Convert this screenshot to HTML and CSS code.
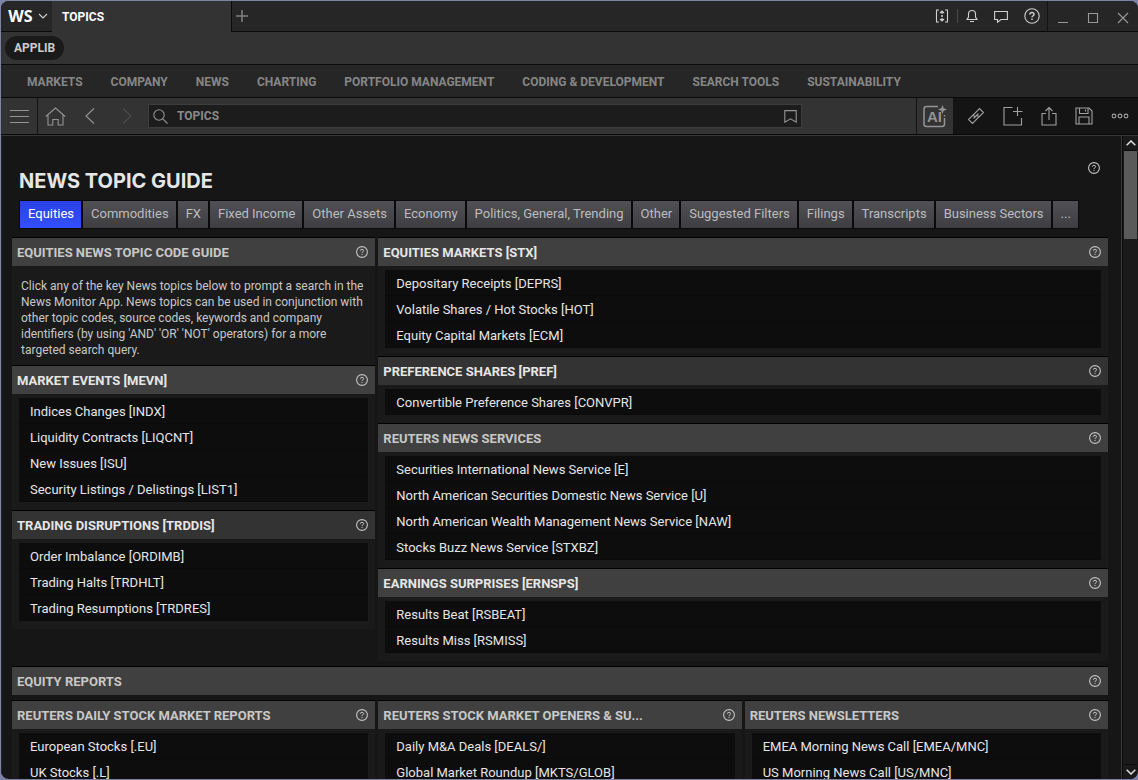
FILE: index.html
```html
<!DOCTYPE html>
<html lang="en">
<head>
<meta charset="utf-8">
<title>News Topic Guide</title>
<link rel="stylesheet" href="styles.css">
</head>
<body>
<svg class="defs" aria-hidden="true">
  <symbol id="help" viewBox="0 0 12 12">
    <circle cx="6" cy="6" r="5.4" fill="none" stroke="currentColor" stroke-width="1.1"/>
    <path d="M4.400 4.900V4.600Q4.400 3.300 6 3.300T7.600 4.700Q7.600 5.500 6.600 5.900Q6 6.200 6 7M6 7.900V9" fill="none" stroke="currentColor" stroke-width="1"/>
  </symbol>
</svg>
<div class="window">
  <header class="titlebar">
    <button class="brand"><span class="logo">WS</span>
      <svg width="10" height="6" viewBox="0 0 10 6"><path d="M1 1l4 4 4-4" class="line"/></svg>
    </button>
    <button class="window-tab">TOPICS</button>
    <div class="title-rest">
      <button class="plus" aria-label="New tab"><svg width="12" height="12" viewBox="0 0 12 12"><path d="M6 0v12M0 6h12" class="line thick"/></svg></button>
      <div class="status">
        <button aria-label="Layout"><svg width="14" height="14" viewBox="0 0 14 14"><path d="M4 1H1.500v12H4M10 1h2.500v12H10M5 4l2-2 2 2M5 10l2 2 2-2M7 2v3M7 9v3" class="line"/><circle cx="7" cy="7" r="1" fill="currentColor"/></svg></button>
        <span class="split"></span>
        <button aria-label="Alerts"><svg width="12" height="14" viewBox="0 0 12 14"><path d="M1 10.500h10L9.500 8V5Q9.500 1.500 6 1.500T2.500 5v3zM4 12.500h4" class="line"/></svg></button>
        <button aria-label="Messages"><svg width="14" height="13" viewBox="0 0 14 13"><path d="M.6 1.500h12.800v8H7l-3.500 2.700V9.500H.6z" class="line"/></svg></button>
        <button aria-label="Help"><svg width="16" height="16" viewBox="0 0 16 16"><circle cx="8" cy="8" r="7.200" class="line"/><path d="M5.900 6.500Q5.900 4.600 8 4.600T10 6.300Q10 7.200 9 7.800Q8 8.300 8 9.300M8 10.500v1.500" class="line thick"/></svg></button>
      </div>
      <div class="controls">
        <button aria-label="Minimize"><svg width="12" height="12" viewBox="0 0 12 12"><path d="M1 10.500h10" class="line"/></svg></button>
        <button aria-label="Maximize"><svg width="12" height="12" viewBox="0 0 12 12"><path d="M1.500 1.500h9v9h-9z" class="line"/></svg></button>
        <button aria-label="Close"><svg width="12" height="12" viewBox="0 0 12 12"><path d="M1 1l10 10M11 1L1 11" class="line"/></svg></button>
      </div>
    </div>
  </header>
  <div class="applib-row"><button class="applib">APPLIB</button></div>
  <nav class="menu">
    <a href="#">MARKETS</a><a href="#">COMPANY</a><a href="#">NEWS</a><a href="#">CHARTING</a><a href="#">PORTFOLIO MANAGEMENT</a><a href="#">CODING &amp; DEVELOPMENT</a><a href="#">SEARCH TOOLS</a><a href="#">SUSTAINABILITY</a>
  </nav>
  <div class="toolbar">
    <button class="burger" aria-label="Menu"><svg width="19" height="15" viewBox="0 0 19 15"><path d="M0 1.500h19M0 7.500h19M0 13.500h19" class="line"/></svg></button>
    <button class="home" aria-label="Home"><svg width="21" height="19" viewBox="0 0 21 19"><path d="M.8 9.500L10.500 1l9.700 8.500M3 7.800V18h4.800v-5.500h5.400V18H18V7.800" class="line"/></svg></button>
    <button class="back" aria-label="Back"><svg width="10" height="16" viewBox="0 0 10 16"><path d="M9 .5L1 8l8 7.500" class="line"/></svg></button>
    <button class="forward" aria-label="Forward"><svg width="10" height="16" viewBox="0 0 10 16"><path d="M1 .5L9 8l-8 7.500" class="line"/></svg></button>
    <div class="search">
      <svg width="15" height="15" viewBox="0 0 15 15"><circle cx="6" cy="6" r="5.200" class="line"/><path d="M9.800 9.800l4.700 4.700" class="line"/></svg>
      <input type="text" value="TOPICS" aria-label="Search">
      <button aria-label="Bookmark"><svg width="13" height="13" viewBox="0 0 13 13"><path d="M.8 .6h11.400v11.600L6.500 8.800 .8 12.200z" class="line"/></svg></button>
    </div>
    <button class="ai" aria-label="AI"><svg width="24" height="23" viewBox="0 0 24 23"><path d="M15 1.500H3.500Q1 1.500 1 4v15q0 2.500 2.500 2.500h15.500q2.500 0 2.500-2.500v-6M21.500 11.500V10" class="line thick"/><path d="M19.500 0l1.200 3.300L24 4.500l-3.300 1.200L19.500 9l-1.200-3.300L15 4.500l3.300-1.200z" fill="currentColor"/><text x="4" y="17" class="ai-text">AI</text></svg></button>
    <div class="tools">
      <button aria-label="Link"><svg width="18" height="18" viewBox="0 0 18 18"><path d="M8 9.800L6.200 8 12.500 1.500 16.500 5.500 12 10 10.800 8.800M10 8.200L11.800 10 5.500 16.500 1.500 12.500 6 8 7.200 9.200M6.500 11.500l5-5" class="line"/></svg></button>
      <button aria-label="Add window"><svg width="20" height="20" viewBox="0 0 20 20"><path d="M9.500 1.500H1v17.500h17.500V12M14.500 1v9M10 5.500h9.500" class="line"/></svg></button>
      <button aria-label="Share"><svg width="16" height="20" viewBox="0 0 16 20"><path d="M5 7.500H1V19h14V7.500h-4M8 14V1.500M4.500 5L8 1.500 11.500 5" class="line"/></svg></button>
      <button aria-label="Save"><svg width="18" height="18" viewBox="0 0 18 18"><path d="M1 1h13l3 3v13H1zM4.500 1v5.500h8.500V1M10.500 2.500v2M4 17v-7h10v7" class="line"/></svg></button>
      <button aria-label="More"><svg width="18" height="6" viewBox="0 0 18 6"><circle cx="3" cy="3" r="1.900" class="line"/><circle cx="9" cy="3" r="1.900" class="line"/><circle cx="15" cy="3" r="1.900" class="line"/></svg></button>
    </div>
  </div>
  <div class="viewport">
    <main class="page">
      <div class="page-head">
        <h1>NEWS TOPIC GUIDE</h1>
        <button class="help" aria-label="Help"><svg><use href="#help"/></svg></button>
      </div>
      <div class="tabs">
        <button class="active">Equities</button><button>Commodities</button><button>FX</button><button>Fixed Income</button><button>Other Assets</button><button>Economy</button><button>Politics, General, Trending</button><button>Other</button><button>Suggested Filters</button><button>Filings</button><button>Transcripts</button><button>Business Sectors</button><button>...</button>
      </div>
      <div class="grid">
        <div class="column">
          <section class="panel">
            <div class="head"><h2>EQUITIES NEWS TOPIC CODE GUIDE</h2><button class="help" aria-label="Help"><svg><use href="#help"/></svg></button></div>
            <p>Click any of the key News topics below to prompt a search in the News Monitor App. News topics can be used in conjunction with other topic codes, source codes, keywords and company identifiers (by using 'AND' 'OR' 'NOT' operators) for a more targeted search query.</p>
          </section>
          <section class="panel">
            <div class="head code"><h2>MARKET EVENTS [MEVN]</h2><button class="help" aria-label="Help"><svg><use href="#help"/></svg></button></div>
            <ul><li><a href="#">Indices Changes [INDX]</a></li><li><a href="#">Liquidity Contracts [LIQCNT]</a></li><li><a href="#">New Issues [ISU]</a></li><li><a href="#">Security Listings / Delistings [LIST1]</a></li></ul>
          </section>
          <section class="panel">
            <div class="head code dark"><h2>TRADING DISRUPTIONS [TRDDIS]</h2><button class="help" aria-label="Help"><svg><use href="#help"/></svg></button></div>
            <ul><li><a href="#">Order Imbalance [ORDIMB]</a></li><li><a href="#">Trading Halts [TRDHLT]</a></li><li><a href="#">Trading Resumptions [TRDRES]</a></li></ul>
          </section>
        </div>
        <div class="column wide">
          <section class="panel">
            <div class="head code"><h2>EQUITIES MARKETS [STX]</h2><button class="help" aria-label="Help"><svg><use href="#help"/></svg></button></div>
            <ul><li><a href="#">Depositary Receipts [DEPRS]</a></li><li><a href="#">Volatile Shares / Hot Stocks [HOT]</a></li><li><a href="#">Equity Capital Markets [ECM]</a></li></ul>
          </section>
          <section class="panel">
            <div class="head code dark"><h2>PREFERENCE SHARES [PREF]</h2><button class="help" aria-label="Help"><svg><use href="#help"/></svg></button></div>
            <ul><li><a href="#">Convertible Preference Shares [CONVPR]</a></li></ul>
          </section>
          <section class="panel">
            <div class="head"><h2>REUTERS NEWS SERVICES</h2><button class="help" aria-label="Help"><svg><use href="#help"/></svg></button></div>
            <ul><li><a href="#">Securities International News Service [E]</a></li><li><a href="#">North American Securities Domestic News Service [U]</a></li><li><a href="#">North American Wealth Management News Service [NAW]</a></li><li><a href="#">Stocks Buzz News Service [STXBZ]</a></li></ul>
          </section>
          <section class="panel">
            <div class="head code"><h2>EARNINGS SURPRISES [ERNSPS]</h2><button class="help" aria-label="Help"><svg><use href="#help"/></svg></button></div>
            <ul><li><a href="#">Results Beat [RSBEAT]</a></li><li><a href="#">Results Miss [RSMISS]</a></li></ul>
          </section>
        </div>
        <section class="panel full">
          <div class="head"><h2>EQUITY REPORTS</h2><button class="help" aria-label="Help"><svg><use href="#help"/></svg></button></div>
        </section>
        <section class="panel">
          <div class="head"><h2>REUTERS DAILY STOCK MARKET REPORTS</h2><button class="help" aria-label="Help"><svg><use href="#help"/></svg></button></div>
          <ul><li><a href="#">European Stocks [.EU]</a></li><li><a href="#">UK Stocks [.L]</a></li></ul>
        </section>
        <section class="panel">
          <div class="head"><h2>REUTERS STOCK MARKET OPENERS &amp; SU...</h2><button class="help" aria-label="Help"><svg><use href="#help"/></svg></button></div>
          <ul><li><a href="#">Daily M&amp;A Deals [DEALS/]</a></li><li><a href="#">Global Market Roundup [MKTS/GLOB]</a></li></ul>
        </section>
        <section class="panel">
          <div class="head"><h2>REUTERS NEWSLETTERS</h2><button class="help" aria-label="Help"><svg><use href="#help"/></svg></button></div>
          <ul><li><a href="#">EMEA Morning News Call [EMEA/MNC]</a></li><li><a href="#">US Morning News Call [US/MNC]</a></li></ul>
        </section>
      </div>
    </main>
    <div class="scrollbar">
      <button aria-label="Scroll up"><svg width="10" height="6" viewBox="0 0 10 6"><path d="M.7 5.300L5 1l4.300 4.300" class="line thick"/></svg></button>
      <div class="track"><div class="thumb"></div></div>
      <button aria-label="Scroll down"><svg width="10" height="6" viewBox="0 0 10 6"><path d="M.7 .7L5 5 9.300 .7" class="line thick"/></svg></button>
    </div>
  </div>
</div>
</body>
</html>
```
FILE: styles.css
```css
* { box-sizing: border-box; }
body {
  margin: 0;
  padding: 1px 0 1px 1px;
  height: 100vh;
  background: #7c82a8;
  font-family: Roboto, "Liberation Sans", sans-serif;
  font-size: 13px;
  color: #e6e6e6;
  overflow: hidden;
}
.defs { display: none; }
button {
  display: flex;
  align-items: center;
  justify-content: center;
  margin: 0;
  padding: 0;
  border: 0;
  background: none;
  color: inherit;
  font: inherit;
}
a { color: inherit; text-decoration: none; }
h1, h2, p, ul { margin: 0; padding: 0; }
svg { display: block; flex: none; }
.line { fill: none; stroke: currentColor; stroke-width: 1.1; }
.thick { stroke-width: 1.5; }

.window {
  display: flex;
  flex-direction: column;
  height: 100%;
  border-radius: 8px;
  background: #161616;
  overflow: hidden;
}

.titlebar { display: flex; flex: none; height: 31px; background: #333; }
.brand { width: 51px; gap: 5px; padding-left: 3px; background: #262626; border-bottom: 1px solid #0a0a0a; color: #d0d0d0; }
.logo { font: bold 16px "Noto Sans", sans-serif; color: #fff; }
.window-tab { width: 179px; padding-left: 10px; justify-content: flex-start; font-size: 12px; font-weight: 700; color: #fff; }
.title-rest {
  display: flex;
  flex: 1;
  background: #262626;
  border-left: 1px solid #0a0a0a;
  border-bottom: 1px solid #0a0a0a;
}
.plus { width: 20px; color: #808080; }
.status { display: flex; align-items: center; gap: 16px; margin-left: auto; padding-right: 7px; color: #d0d0d0; }
.status .split { width: 1px; height: 14px; margin: 0 -8px; background: #4a4a4a; }
.controls { display: flex; align-items: center; gap: 18px; padding: 3px 9px 0; border-left: 1px solid #141414; color: #999; }

.applib-row { display: flex; flex: none; align-items: center; height: 33px; padding-left: 4px; background: #333; border-bottom: 1px solid #0a0a0a; }
.applib { height: 24px; padding: 0 9px; border-radius: 12px; background: #1a1a1a; font-size: 12px; font-weight: 700; color: #ccc; }

.menu { display: flex; flex: none; align-items: center; gap: 28px; height: 33px; padding: 2px 0 0 26px; background: #262626; border-bottom: 1px solid #0a0a0a; font-size: 12px; font-weight: 700; color: #868686; white-space: nowrap; }

.toolbar { display: flex; flex: none; align-items: stretch; height: 37px; background: #333; border-bottom: 1px solid #0a0a0a; color: #949494; }
.burger { width: 37px; border-right: 1px solid #141414; }
.home { width: 35px; }
.back { width: 34px; }
.forward { width: 40px; color: #4c4c4c; }
.search { display: flex; flex: 1; align-items: center; gap: 9px; height: 24px; margin: 6px 114px 0 1px; padding: 0 4px; background: #1c1c1c; border: 1px solid #3d3d3d; }
.search input { flex: 1; min-width: 0; padding: 0; border: 0; outline: 0; background: none; font: 700 12px Roboto, sans-serif; color: #8a8a8a; }
.ai { width: 37px; border-left: 1px solid #141414; }
.ai-text { font: 700 15px "Liberation Sans", sans-serif; fill: currentColor; }
.tools { display: flex; align-items: center; width: 185px; padding: 0 9px 0 14px; justify-content: space-between; background: #141414; color: #a0a0a0; }

.viewport { display: flex; flex: 1; min-height: 0; border-top: 1px solid #363636; border-left: 1px solid #262626; }
.page { flex: 1; min-width: 0; padding: 26px 13px 0 10px; border-right: 1px solid #3a3a3a; overflow: hidden; }
.page-head { display: flex; justify-content: space-between; align-items: flex-start; height: 38px; padding: 0 8px 0 7px; }
h1 { font: 700 20px/26px Inter, sans-serif; }
.page-head h1 { align-self: center; }
.help { width: 12px; height: 12px; color: #c4c4c4; }
.help svg { width: 12px; height: 12px; }

.tabs { display: flex; width: max-content; margin: 0 0 8px 7px; border: 1px solid #0a0a0a; gap: 2px; background: #0a0a0a; }
.tabs button { height: 27px; padding: 0 7px 2px 8px; background: linear-gradient(#505055, #3d3d42); color: #bdbdbd; white-space: nowrap; }
.tabs .active { background: linear-gradient(#2b40e6, #3350ff); color: #fff; }

.grid { display: grid; grid-template-columns: repeat(3, minmax(0, 1fr)); gap: 5px 3px; }
.wide { grid-column: span 2; }
.full { grid-column: 1 / -1; }
.panel { background: #1a1a1a; border-top: 1px solid #000; }
.head { display: flex; align-items: center; justify-content: space-between; height: 28px; padding: 0 7px 0 5px; background: #404040; color: #c8c8c8; }
.head.code { color: #e6e6e6; }
.head.dark { background: #333; }
h2 { font-size: 13px; line-height: 28px; padding-top: 2px; font-weight: 700; white-space: nowrap; }
.panel p { padding: 12px 9px 7px; font-size: 12px; line-height: 16px; color: #c8c8c8; }
.panel ul { list-style: none; padding: 4px 7px 8px; }
.panel li { height: 26px; padding-left: 11px; background: #0d0d0d; border-bottom: 1px solid #0a0a0a; line-height: 28px; white-space: nowrap; }

.scrollbar { display: flex; flex-direction: column; width: 16px; padding: 0 1px; background: #1a1a1a; border-left: 1px solid #0a0a0a; color: #ddd; }
.scrollbar button { height: 14px; }
.track { flex: 1; border-top: 1px solid #0a0a0a; border-bottom: 1px solid #0a0a0a; }
.thumb { height: 88px; background: #5a5a5a; }
```
